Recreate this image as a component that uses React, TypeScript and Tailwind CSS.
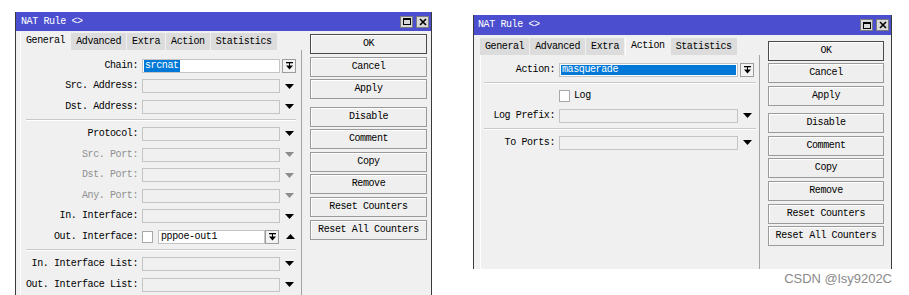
import type { ReactNode } from 'react'

const mono = "font-['Liberation_Mono',monospace] text-[10px] tracking-[-0.4px] leading-none"

function Down({ gray }: { gray?: boolean }) {
  return (
    <svg width="9" height="5" viewBox="0 0 9 5" className="block">
      <polygon points="0,0 9,0 4.5,5" fill={gray ? '#8c8c8c' : '#000'} />
    </svg>
  )
}

function Up() {
  return (
    <svg width="9" height="5" viewBox="0 0 9 5" className="block">
      <polygon points="0,5 9,5 4.5,0" fill="#000" />
    </svg>
  )
}

function DropBox() {
  return (
    <div className="w-[14px] h-[14px] border border-[#9c9c9c] bg-[#f3f3f3] flex items-center justify-center shrink-0">
      <svg width="7" height="8" viewBox="0 0 7 8" className="block">
        <rect x="0" y="0" width="7" height="1.3" fill="#000" />
        <rect x="3" y="1" width="1" height="3" fill="#000" />
        <polygon points="0,3.5 7,3.5 3.5,7.5" fill="#000" />
      </svg>
    </div>
  )
}

function TitleBar({ h, pl }: { h: string; pl: string }) {
  return (
    <div className={`${h} ${pl} bg-[#4b4fcf] flex items-center justify-between pr-[2px] shrink-0`}>
      <span className={`${mono} text-white`}>NAT Rule &lt;&gt;</span>
      <div className="flex gap-[3px]">
        <div className="w-[13px] h-[12px] bg-[#d9d9d9] border border-[#7c7c7c] flex items-center justify-center">
          <div className="w-[8px] h-[7px] border border-black border-t-2" />
        </div>
        <div className="w-[13px] h-[12px] bg-[#d9d9d9] border border-[#7c7c7c] flex items-center justify-center">
          <svg width="8" height="8" viewBox="0 0 8 8" className="block">
            <path d="M1 1 L7 7 M7 1 L1 7" stroke="#000" strokeWidth="1.6" />
          </svg>
        </div>
      </div>
    </div>
  )
}

const tabNames = ['General', 'Advanced', 'Extra', 'Action', 'Statistics']

function Tabs({ active, mt }: { active: string; mt: string }) {
  return (
    <div className={`flex gap-[1px] ${mt} h-[17px] items-end shrink-0`}>
      {tabNames.map((t) =>
        t === active ? (
          <div key={t} className={`${mono} h-[18px] px-[5px] bg-[#f0f0f0] border-l border-white flex items-center text-black`}>
            {t}
          </div>
        ) : (
          <div key={t} className={`${mono} h-[17px] px-[5px] bg-[#dcdcdc] flex items-center text-black`}>
            {t}
          </div>
        )
      )}
    </div>
  )
}

function Btn({ label, def, extra }: { label: string; def?: boolean; extra?: string }) {
  return (
    <div
      className={`${mono} h-[20px] shrink-0 flex items-center justify-center bg-[#efefef] text-black border ${
        def ? 'border-[#4a4a4a]' : 'border-[#9a9a9a]'
      } shadow-[inset_1px_1px_0_#ffffff] ${extra ?? 'mb-[2.6px]'}`}
    >
      {label}
    </div>
  )
}

function Buttons({ pt }: { pt: string }) {
  return (
    <div className={`flex flex-col ${pt}`}>
      <Btn label="OK" def />
      <Btn label="Cancel" />
      <Btn label="Apply" extra="mb-[7.5px]" />
      <Btn label="Disable" />
      <Btn label="Comment" />
      <Btn label="Copy" />
      <Btn label="Remove" />
      <Btn label="Reset Counters" />
      <Btn label="Reset All Counters" />
    </div>
  )
}

function Row({ label, labelW, gray, h = 'h-[20.6px]', children }: { label: string; labelW: string; gray?: boolean; h?: string; children: ReactNode }) {
  return (
    <div className={`flex items-center ${h} shrink-0`}>
      <div className={`${mono} ${labelW} text-right ${gray ? 'text-[#8f8f8f]' : 'text-black'} whitespace-pre`}>{label}</div>
      <div className="flex items-center ml-[4px]">{children}</div>
    </div>
  )
}

function Field({ w }: { w: string }) {
  return <div className={`${w} h-[14px] border border-[#c4c4c4] bg-[#f0f0f0] shrink-0`} />
}

function Sep({ mx = 'mx-[5px]' }: { mx?: string }) {
  return (
    <div className="h-[6.4px] flex items-center shrink-0">
      <div className={`flex-1 ${mx} h-[2px] border-t border-[#c8c8c8] border-b border-b-white`} />
    </div>
  )
}

function LeftPanel() {
  const lw = 'w-[117px]'
  const fw = 'w-[138px]'
  return (
    <div className="flex-1 flex flex-col pt-[5.5px] bg-[#f0f0f0] border-l border-white border-r border-r-[#a3a3a3] min-h-0">
      <Row label="Chain:" labelW={lw}>
        <div className={`${fw} h-[14px] border border-[#c4c4c4] bg-white flex items-center pl-[1px] shrink-0`}>
          <span className={`${mono} bg-[#0078d7] text-white px-[1px] py-[1px]`}>srcnat</span>
        </div>
        <div className="ml-[2px]">
          <DropBox />
        </div>
      </Row>
      <Row label="Src. Address:" labelW={lw}>
        <Field w={fw} />
        <div className="ml-[5px]"><Down /></div>
      </Row>
      <Row label="Dst. Address:" labelW={lw}>
        <Field w={fw} />
        <div className="ml-[5px]"><Down /></div>
      </Row>
      <Sep />
      <Row label="Protocol:" labelW={lw}>
        <Field w={fw} />
        <div className="ml-[5px]"><Down /></div>
      </Row>
      <Row label="Src. Port:" labelW={lw} gray>
        <Field w={fw} />
        <div className="ml-[5px]"><Down gray /></div>
      </Row>
      <Row label="Dst. Port:" labelW={lw} gray>
        <Field w={fw} />
        <div className="ml-[5px]"><Down gray /></div>
      </Row>
      <Row label="Any. Port:" labelW={lw} gray>
        <Field w={fw} />
        <div className="ml-[5px]"><Down gray /></div>
      </Row>
      <Row label="In. Interface:" labelW={lw}>
        <Field w={fw} />
        <div className="ml-[5px]"><Down /></div>
      </Row>
      <Row label="Out. Interface:" labelW={lw}>
        <div className="w-[11px] h-[12px] border border-[#a8a8a8] bg-white shrink-0" />
        <div className="ml-[5px] w-[107px] h-[14px] border border-[#c4c4c4] bg-white flex items-center pl-[2px] shrink-0">
          <span className={`${mono} text-black`}>pppoe-out1</span>
        </div>
        <DropBox />
        <div className="ml-[7px]"><Up /></div>
      </Row>
      <Sep />
      <Row label="In. Interface List:" labelW={lw}>
        <Field w={fw} />
        <div className="ml-[5px]"><Down /></div>
      </Row>
      <Row label="Out. Interface List:" labelW={lw}>
        <Field w={fw} />
        <div className="ml-[5px]"><Down /></div>
      </Row>
    </div>
  )
}

function RightPanel() {
  const lw = 'w-[74px]'
  const fw = 'w-[179px]'
  return (
    <div className="flex-1 flex flex-col pt-[4.7px] bg-[#f0f0f0] border-l border-white border-r border-r-[#a3a3a3] min-h-0">
      <Row label="Action:" labelW={lw}>
        <div className={`${fw} h-[14px] border border-[#c4c4c4] bg-white p-[1px] shrink-0`}>
          <div className={`${mono} h-full bg-[#0078d7] text-white flex items-center pl-[1px]`}>masquerade</div>
        </div>
        <div className="ml-[2px]">
          <DropBox />
        </div>
      </Row>
      <Sep mx="mx-[3px]" />
      <Row label="" labelW={lw} h="h-[18.6px]">
        <div className="w-[11px] h-[12px] border border-[#a8a8a8] bg-white shrink-0" />
        <span className={`${mono} ml-[4px] text-black`}>Log</span>
      </Row>
      <Row label="Log Prefix:" labelW={lw}>
        <Field w={fw} />
        <div className="ml-[5px]"><Down /></div>
      </Row>
      <Sep mx="mx-[3px]" />
      <Row label="To Ports:" labelW={lw}>
        <Field w={fw} />
        <div className="ml-[5px]"><Down /></div>
      </Row>
    </div>
  )
}

export default function App() {
  return (
    <div className="w-[909px] h-[295px] bg-white flex overflow-hidden">
      {/* left window, runs past the bottom edge */}
      <div className="ml-[15px] mt-[12px] w-[417px] h-[290px] shrink-0 bg-[#f0f0f0] border-x border-[#3a3a3a] flex flex-col">
        <TitleBar h="h-[19px]" pl="pl-[5px]" />
        <div className="flex flex-1 min-h-0 pl-[4px] pr-[4px]">
          <div className="w-[282px] flex flex-col">
            <Tabs active="General" mt="mt-[2px]" />
            <LeftPanel />
          </div>
          <div className="ml-[8px] w-[117px]">
            <Buttons pt="pt-[3px]" />
          </div>
        </div>
      </div>

      {/* right window + watermark */}
      <div className="ml-[41px] mt-[15px] flex flex-col items-end shrink-0">
        <div className="w-[419px] h-[254px] bg-[#f0f0f0] border-x border-[#3a3a3a] flex flex-col">
          <TitleBar h="h-[20px]" pl="pl-[4px]" />
          <div className="flex flex-1 min-h-0 pl-[6px] pr-[7px]">
            <div className="w-[280px] flex flex-col">
              <Tabs active="Action" mt="mt-[3px]" />
              <RightPanel />
            </div>
            <div className="ml-[8px] w-[116px]">
              <Buttons pt="pt-[5.5px]" />
            </div>
          </div>
        </div>
        <div className="mt-[2px] text-[13px] leading-[15px] text-[#8a8a8a] font-['Liberation_Sans',Arial,sans-serif]">
          CSDN @lsy9202C
        </div>
      </div>
    </div>
  )
}
